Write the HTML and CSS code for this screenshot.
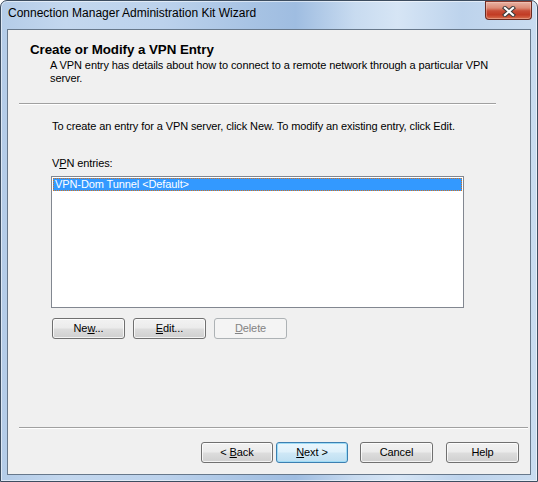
FILE: index.html
```html
<!DOCTYPE html>
<html>
<head>
<meta charset="utf-8">
<title>Connection Manager Administration Kit Wizard</title>
<link rel="stylesheet" href="styles.css">
</head>
<body>
<div class="window">
  <div class="titlebar">
    <span class="title">Connection Manager Administration Kit Wizard</span>
    <div class="close">
      <svg width="14" height="11" viewBox="0 0 14 11">
        <path d="M3 2 L11 9 M11 2 L3 9" stroke="#3b3b3b" stroke-width="4.2" stroke-linecap="square" fill="none"/>
        <path d="M3 2 L11 9 M11 2 L3 9" stroke="#ffffff" stroke-width="2.2" stroke-linecap="square" fill="none"/>
      </svg>
    </div>
  </div>
  <div class="client">
    <div class="hdr-title">Create or Modify a VPN Entry</div>
    <div class="hdr-desc">A VPN entry has details about how to connect to a remote network through a particular VPN server.</div>
    <div class="sep sep-top"></div>
    <div class="intro">To create an entry for a VPN server, click New. To modify an existing entry, click Edit.</div>
    <div class="label">V<u>P</u>N entries:</div>
    <div class="listbox">
      <div class="item selected">VPN-Dom Tunnel &lt;Default&gt;</div>
    </div>
    <div class="btn-row">
      <div class="btn"><span>Ne<u>w</u>...</span></div>
      <div class="btn"><span><u>E</u>dit...</span></div>
      <div class="btn disabled"><span><u>D</u>elete</span></div>
    </div>
    <div class="sep sep-bottom"></div>
    <div class="nav-row">
      <div class="btn nav back"><span>&lt; <u>B</u>ack</span></div>
      <div class="btn nav default"><span><u>N</u>ext &gt;</span></div>
      <div class="btn nav cancel"><span>Cancel</span></div>
      <div class="btn nav help"><span>Help</span></div>
    </div>
  </div>
</div>
</body>
</html>
```

FILE: styles.css
```css
html, body {
  margin: 0;
  padding: 0;
  background: #ffffff;
}

.window {
  width: 538px;
  height: 482px;
  box-sizing: border-box;
  border: 1px solid #3d4d60;
  border-radius: 7px 7px 0 0;
  padding: 0 6px 6px 6px;
  display: flex;
  flex-direction: column;
  background:
    linear-gradient(90deg,
      #b4cce8 0%,
      #c3d7ee 12%,
      #bcd2ec 30%,
      #a6c2e3 48%,
      #9fbde1 55%,
      #c8dbf0 66%,
      #d6e5f5 74%,
      #bdd3ec 86%,
      #c9dcf0 100%);
  box-shadow: inset 0 0 0 1px rgba(255, 255, 255, 0.55);
}

.titlebar {
  height: 28px;
  display: flex;
  justify-content: space-between;
  align-items: flex-start;
  padding-left: 1px;
}

.title {
  margin-top: 5px;
  font-family: "Liberation Sans", Arial, sans-serif;
  font-size: 12px;
  line-height: 15px;
  color: #000000;
  white-space: nowrap;
}

.close {
  width: 47px;
  height: 19px;
  box-sizing: border-box;
  margin-top: 0;
  margin-right: -1px;
  border: 1px solid #6b2a20;
  border-top-color: #8a3a2e;
  border-radius: 0 0 4px 4px;
  background: linear-gradient(180deg,
    #e8b3a4 0%,
    #dc8b76 35%,
    #c84d37 52%,
    #c23b24 75%,
    #d8704f 100%);
  box-shadow: inset 0 0 0 1px rgba(255, 220, 210, 0.35);
  display: flex;
  align-items: center;
  justify-content: center;
}

.close svg {
  display: block;
  margin-top: 1px;
}

.client {
  flex: 1;
  border: 1px solid #67788b;
  background: #f0f0f0;
  display: flex;
  flex-direction: column;
  font-family: "Liberation Sans", Arial, sans-serif;
  font-size: 11px;
  line-height: 13px;
  letter-spacing: -0.1px;
  color: #000000;
}

.hdr-title {
  margin: 11px 0 0 22px;
  font-size: 13.33px;
  font-weight: bold;
  line-height: 17px;
  letter-spacing: -0.05px;
}

.hdr-desc {
  margin: 1px 0 0 42px;
  width: 460px;
}

.sep {
  height: 0;
  border-top: 1px solid #a0a0a0;
  border-bottom: 1px solid #ffffff;
  margin-left: 11px;
}

.sep-top {
  margin-top: 18px;
  width: 477px;
}

.intro {
  margin: 15px 0 0 44px;
}

.label {
  margin: 24px 0 0 44px;
}

.listbox {
  margin: 6px 0 0 43px;
  width: 413px;
  height: 132px;
  box-sizing: border-box;
  border: 1px solid #828790;
  background: #ffffff;
  padding: 1px;
}

.item {
  height: 13px;
  box-sizing: border-box;
  padding-left: 1px;
  line-height: 11px;
  white-space: nowrap;
}

.item.selected {
  background: #3399ff;
  color: #ffffff;
  border: 1px dotted #d5731d;
}

.btn-row {
  margin: 10px 0 0 44px;
  display: flex;
  gap: 8px;
}

.btn {
  width: 73px;
  height: 21px;
  box-sizing: border-box;
  border: 1px solid #707070;
  border-radius: 3px;
  background: linear-gradient(180deg, #f2f2f2 0%, #ebebeb 48%, #dddddd 52%, #cfcfcf 100%);
  box-shadow: inset 0 0 0 1px rgba(255, 255, 255, 0.75);
  display: flex;
  align-items: center;
  justify-content: center;
  font-size: 11px;
  line-height: 13px;
  color: #000000;
  white-space: nowrap;
}

.btn.disabled {
  border-color: #adb2b5;
  background: #f4f4f4;
  box-shadow: none;
  color: #838383;
}

.sep-bottom {
  margin-top: auto;
  width: 509px;
}

.nav-row {
  margin: 13px 11px 11px 0;
  display: flex;
  justify-content: flex-end;
}

.btn.nav {
  width: 73px;
}

.btn.back {
  width: 72px;
}

.btn.default {
  width: 72px;
  margin-left: 3px;
  border-color: #3c7fb1;
  background: linear-gradient(180deg, #eaf6fd 0%, #dff1fb 48%, #cfe8f6 52%, #bedff2 100%);
  box-shadow: inset 0 0 0 1px #9fdcf6;
}

.btn.cancel {
  margin-left: 12px;
}

.btn.help {
  margin-left: 13px;
}
```
